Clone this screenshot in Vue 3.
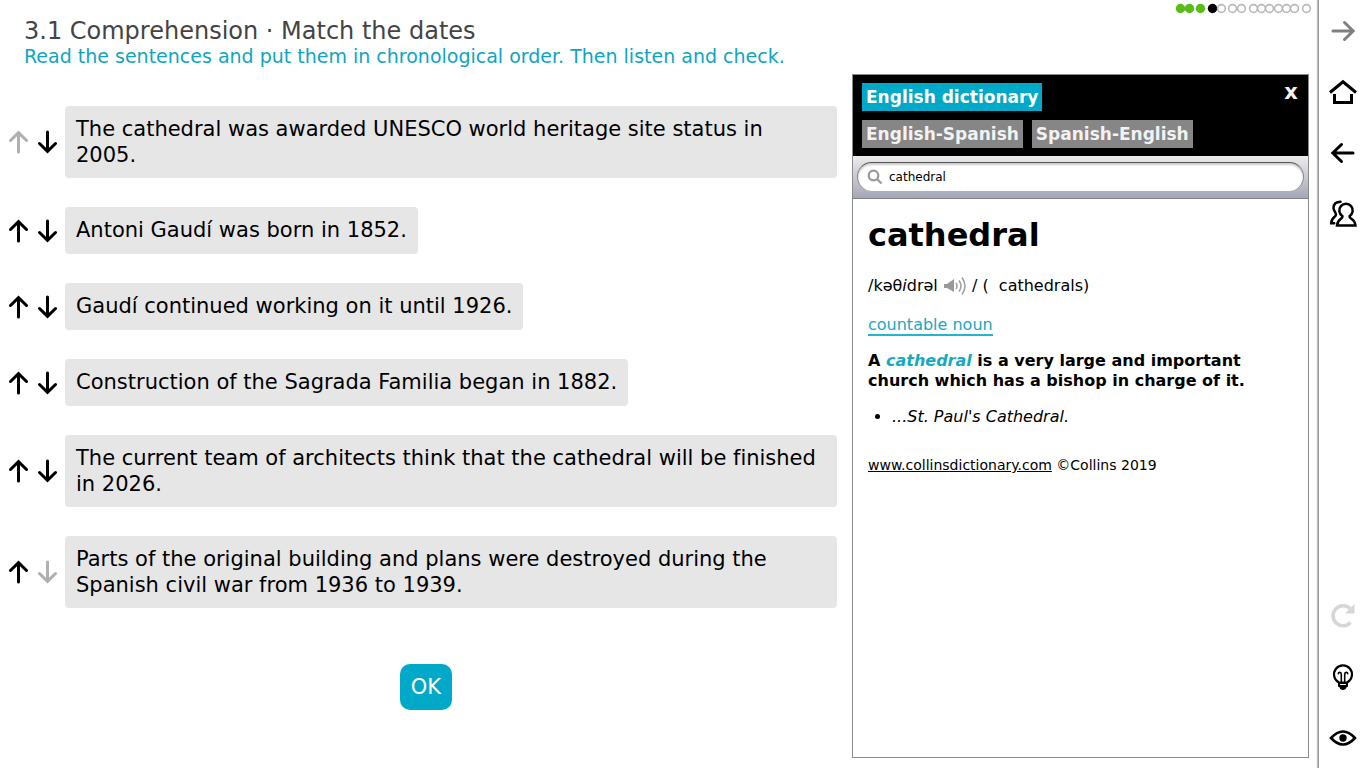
<script setup>
import { ref } from 'vue'

const sentences = [
  'The cathedral was awarded UNESCO world heritage site status in 2005.',
  'Antoni Gaudí was born in 1852.',
  'Gaudí continued working on it until 1926.',
  'Construction of the Sagrada Familia began in 1882.',
  'The current team of architects think that the cathedral will be finished in 2026.',
  'Parts of the original building and plans were destroyed during the Spanish civil war from 1936 to 1939.'
]

const query = ref('cathedral')

const dots = [
  { x: 6, state: 'done' }, { x: 15, state: 'done' }, { x: 26, state: 'done' },
  { x: 38, state: 'current' }, { x: 47, state: 'todo' },
  { x: 58, state: 'todo' }, { x: 67, state: 'todo' },
  { x: 79, state: 'todo' }, { x: 87, state: 'todo' }, { x: 95, state: 'todo' },
  { x: 104, state: 'todo' }, { x: 112, state: 'todo' }, { x: 120, state: 'todo' },
  { x: 132, state: 'todo' }
]
</script>

<template>
  <div class="page">
    <main class="main">
      <header class="header">
        <div>
          <h1 class="title">3.1 Comprehension · Match the dates</h1>
          <p class="intro">Read the sentences and put them in chronological order. Then listen and check.</p>
        </div>
        <svg class="progress" width="138" height="14" viewBox="0 0 138 14" role="img" aria-label="Progress">
          <circle v-for="d in dots" :key="d.x" :cx="d.x + 0.5" cy="6.5" :r="d.state === 'todo' ? 3.9 : 4.7" :class="d.state" />
        </svg>
      </header>

      <div class="columns">
        <section class="exercise">
          <ol class="list">
            <li v-for="(s, i) in sentences" :key="i" class="row">
              <button class="move" :disabled="i === 0" aria-label="Move up">
                <svg width="20" height="24" viewBox="0 0 20 24"><path d="M10.500 22V3M2.500 10.500l8-7.800 8 7.800" /></svg>
              </button>
              <button class="move" :disabled="i === sentences.length - 1" aria-label="Move down">
                <svg width="20" height="24" viewBox="0 0 20 24"><path d="M10.500 2v19M2.500 13.500l8 7.800 8-7.800" /></svg>
              </button>
              <div class="sentence">{{ s }}</div>
            </li>
          </ol>
          <button class="ok">OK</button>
        </section>

        <aside class="dict">
          <div class="dict-head">
            <div class="tabs">
              <button class="tab active">English dictionary</button>
              <button class="tab">English-Spanish</button>
              <button class="tab">Spanish-English</button>
            </div>
            <button class="close" aria-label="Close dictionary">x</button>
          </div>
          <div class="searchbar">
            <label class="search">
              <svg width="16" height="16" viewBox="0 0 16 16" aria-hidden="true"><circle cx="6.500" cy="6.500" r="4.800" /><path d="M10 10l4.500 4.500" /></svg>
              <input v-model="query" type="text" aria-label="Search word">
            </label>
          </div>
          <article class="entry">
            <h2>cathedral</h2>
            <p class="pron">/kəθ<i>i</i>drəl <button class="speaker" aria-label="Listen"><svg width="24" height="20" viewBox="0 0 24 20"><path class="cone" d="M1 7h3l7-5v13l-7-4H1z" /><path d="M13 6q2 3 0 6M16 3.500q4 5.500 0 11M19 0.500q6 8.500 0 17" /></svg></button> / (&nbsp; cathedrals)</p>
            <p class="pos"><a href="#">countable noun</a></p>
            <p class="def">A <em>cathedral</em> is a very large and important church which has a bishop in charge of it.</p>
            <ul><li>...St. Paul's Cathedral.</li></ul>
            <p class="credit"><a href="#">www.collinsdictionary.com</a> ©Collins 2019</p>
          </article>
        </aside>
      </div>
    </main>

    <nav class="rail" aria-label="Tools">
      <div class="group">
        <button class="dim" aria-label="Next">
          <svg width="28" height="28" viewBox="0 0 28 28"><path d="M4 14h20M15.500 5.500L24.200 14l-8.700 8.500" /></svg>
        </button>
        <button aria-label="Home">
          <svg width="28" height="28" viewBox="0 0 28 28"><path class="butt" d="M1 14.500L14 3.800l13 10.700M5.500 16v8.500h17V16" /></svg>
        </button>
        <button aria-label="Back">
          <svg width="28" height="28" viewBox="0 0 28 28"><path d="M24 14H4M12.500 5.500L3.800 14l8.700 8.500" /></svg>
        </button>
        <button aria-label="Community">
          <svg width="28" height="28" viewBox="0 0 28 28"><path class="person" d="M13.500 16.200A6.700 6.700 0 1 1 20.500 16.200C20 19 26 18.500 26.500 25.500H8C8.500 18.500 14 19 13.500 16.200z" /><path class="person" d="M11.500 1.800C7 2 4.500 4.500 4.500 8c0 2.800 2.500 4.500 2.500 6.500 0 2.800-4.500 2.500-4.800 8.700h3" /></svg>
        </button>
      </div>
      <div class="group">
        <button class="faint" disabled aria-label="Restart">
          <svg width="28" height="28" viewBox="0 0 28 28"><path class="thick" d="M21.500 20.500A10 10 0 1 1 21 6.500" /><path class="solid" d="M25.500 2v9.500H16z" /></svg>
        </button>
        <button aria-label="Hint">
          <svg width="28" height="28" viewBox="0 0 28 28"><path class="thin" d="M10 19.500A9 9 0 1 1 18 19.500z" /><path class="fine" d="M12.300 20v-8.500c0-2.800-3-2.500-3-.8M15.700 20v-8.500c0-2.800 3-2.500 3-.8" /><path class="solid" d="M9 19h10v4.500l-1.500.8c-.5 3.500-6.500 3.500-7 0L9 23.500z" /><path class="gap" d="M11.500 21.500h5" /></svg>
        </button>
        <button aria-label="Show answers">
          <svg width="28" height="28" viewBox="0 0 28 28"><path class="eye" d="M2 14q12-13 24 0-12 13-24 0z" /><circle class="solid" cx="14" cy="14" r="3.700" /></svg>
        </button>
      </div>
    </nav>
  </div>
</template>

<style>
body { margin: 0; background: #fff; }
</style>

<style scoped>
* { box-sizing: border-box; }
.page {
  display: flex;
  min-height: 100vh;
  font-family: "DejaVu Sans", Verdana, sans-serif;
  font-variant-ligatures: none;
  color: #000;
}
button { border: 0; padding: 0; background: none; color: inherit; font: inherit; cursor: pointer; }
svg { display: block; }
h1, h2, p, ul, ol { margin: 0; padding: 0; }

.main { flex: 1; min-width: 0; display: flex; flex-direction: column; }
.header { display: flex; justify-content: space-between; height: 74px; padding: 16px 6px 0 24px; }
.title { font-size: 24px; line-height: 30px; font-weight: 400; color: #444; }
.intro { font-size: 19px; line-height: 20px; color: #0ea5c0; }
.progress { flex: none; margin-top: -14px; }
.done { fill: #58bd16; }
.current { fill: #000; }
.todo { fill: #fff; stroke: #b8b8b8; stroke-width: 1.6; }

.columns { flex: 1; display: flex; padding: 0 9px 10px 0; }
.exercise { flex: 1; min-width: 0; padding-top: 32px; display: flex; flex-direction: column; align-items: center; }
.list { align-self: stretch; padding: 0 15px 0 8px; list-style: none; display: flex; flex-direction: column; gap: 29px; }
.row { display: flex; align-items: center; }
.move { flex: none; width: 20px; margin-right: 9px; }
.move + .move { margin-right: 8px; }
.move path { fill: none; stroke: #000; stroke-width: 3; stroke-linecap: round; }
.move:disabled path { stroke: #b0b0b0; }
.sentence {
  min-height: 47px;
  padding: 10px 11px;
  border-radius: 4px;
  background: #e6e6e6;
  font-size: 21px;
  line-height: 26px;
}
.ok {
  width: 52px;
  height: 46px;
  margin-top: 56px;
  border-radius: 10px;
  background: #00a9c8;
  color: #fff;
  font-size: 21px;
}

.dict { flex: 0 0 457px; display: flex; flex-direction: column; border: 1px solid #8c8c8c; }
.dict-head { display: flex; justify-content: space-between; height: 81px; padding: 8px 9px; background: #000; }
.tabs { display: flex; flex-wrap: wrap; gap: 9px; width: 360px; align-content: flex-start; }
.tab { height: 28px; padding: 0 4px; background: #868686; color: #f2f2f2; font-size: 17px; font-weight: 700; }
.tab.active { background: #00a9c8; color: #fff; margin-right: 100px; }
.close { width: 16px; height: 18px; color: #f2f2f2; font-size: 21px; font-weight: 700; line-height: 14px; }
.searchbar { padding: 6px 4px 7px; border-bottom: 1px solid #80808e; background: linear-gradient(#ececee, #a5a6b5); }
.search {
  display: flex;
  align-items: center;
  height: 29px;
  padding: 0 9px;
  border-radius: 15px;
  border-top: 1px solid #555;
  border-left: 1px solid #888;
  border-right: 1px solid #888;
  background: #fff;
  box-shadow: inset 0 2px 2px #ccc;
}
.search svg { fill: none; stroke: #999; stroke-width: 2.2; }
.search input { flex: 1; min-width: 0; margin-left: 6px; border: 0; padding: 0; outline: 0; background: none; font: 12px "DejaVu Sans", Verdana, sans-serif; color: #000; }

.entry { padding: 15px; font-size: 16px; line-height: 20px; }
.entry h2 { font-size: 32px; line-height: 42px; }
.pron { height: 20px; margin-top: 20px; }
.speaker { display: inline-block; vertical-align: middle; }
.speaker path { fill: none; stroke: #a0a0a0; stroke-width: 1.6; }
.speaker .cone { fill: #999; stroke: none; }
.pos { margin-top: 19px; }
.pos a { display: inline-block; line-height: 19px; border-bottom: 2px solid #22b5cb; color: #1ba7bd; text-decoration: none; }
.def { margin-top: 15px; font-weight: 700; }
.def em { color: #18a9c0; }
.entry ul { margin-top: 16px; padding-left: 24px; }
.entry li { font-style: italic; }
.credit { margin-top: 28px; font-size: 14px; }
.credit a { color: #000; }

.rail {
  flex: 0 0 48px;
  display: flex;
  flex-direction: column;
  justify-content: space-between;
  border-left: 1px solid #999;
  box-shadow: -1px 0 1px #bbb;
}
.rail button { display: flex; width: 100%; height: 61px; align-items: center; justify-content: center; }
.rail path { fill: none; stroke: #000; stroke-width: 3; stroke-linecap: round; }
.rail .butt { stroke-linecap: butt; }
.rail .thin { stroke-width: 2.2; }
.rail .person { stroke-width: 2.5; }
.rail .fine { stroke-width: 1.6; }
.rail .eye { stroke-width: 2.6; }
.rail .thick { stroke-width: 3.5; stroke-linecap: butt; }
.rail .solid { fill: #000; stroke: none; }
.rail .gap { stroke: #fff; stroke-width: 1; }
.rail .dim path { stroke: #808080; }
.rail .faint path { stroke: #d6d6d6; }
.rail .faint .solid { fill: #d6d6d6; stroke: none; }
</style>
